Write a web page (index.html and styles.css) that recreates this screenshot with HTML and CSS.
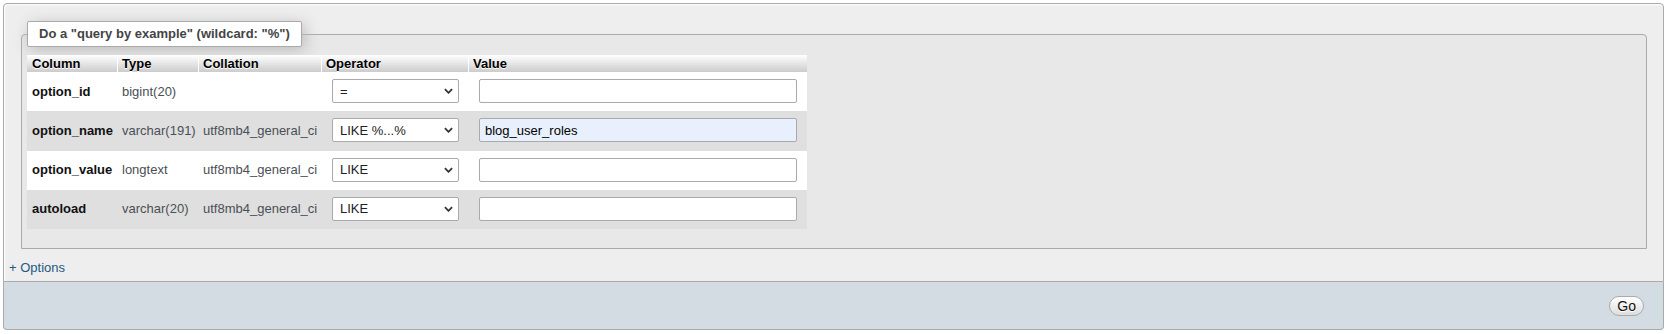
FILE: index.html
```html
<!DOCTYPE html>
<html lang="en">
<head>
    <meta charset="UTF-8">
    <title>Search</title>
    <link rel="stylesheet" href="styles.css">
</head>
<body>
    <div class="panel">
        <fieldset class="search">
            <legend>Do a "query by example" (wildcard: "%")</legend>
            <table class="data">
                <colgroup>
                    <col class="c-name">
                    <col class="c-type">
                    <col class="c-coll">
                    <col class="c-op">
                    <col class="c-val">
                </colgroup>
                <thead>
                    <tr>
                        <th>Column</th>
                        <th>Type</th>
                        <th>Collation</th>
                        <th>Operator</th>
                        <th>Value</th>
                    </tr>
                </thead>
                <tbody>
                    <tr class="odd">
                        <th>option_id</th>
                        <td>bigint(20)</td>
                        <td></td>
                        <td class="ctl"><select class="op"><option>=</option></select></td>
                        <td class="ctl ctl-val"><input class="val" type="text" value=""></td>
                    </tr>
                    <tr class="even">
                        <th>option_name</th>
                        <td>varchar(191)</td>
                        <td>utf8mb4_general_ci</td>
                        <td class="ctl"><select class="op"><option>LIKE %...%</option></select></td>
                        <td class="ctl ctl-val"><input class="val filled" type="text" value="blog_user_roles"></td>
                    </tr>
                    <tr class="odd">
                        <th>option_value</th>
                        <td>longtext</td>
                        <td>utf8mb4_general_ci</td>
                        <td class="ctl"><select class="op"><option>LIKE</option></select></td>
                        <td class="ctl ctl-val"><input class="val" type="text" value=""></td>
                    </tr>
                    <tr class="even">
                        <th>autoload</th>
                        <td>varchar(20)</td>
                        <td>utf8mb4_general_ci</td>
                        <td class="ctl"><select class="op"><option>LIKE</option></select></td>
                        <td class="ctl ctl-val"><input class="val" type="text" value=""></td>
                    </tr>
                </tbody>
            </table>
        </fieldset>
        <div class="options"><a href="#">+ Options</a></div>
    </div>
    <div class="footer">
        <button class="go" type="button">Go</button>
    </div>
</body>
</html>
```

FILE: styles.css
```css
body {
    margin: 0;
    background: #fff;
    font-family: 'Liberation Sans', Arial, sans-serif;
    font-size: 13px;
    color: #444;
}

.panel {
    margin: 3px 3px 0;
    padding: 0 5px;
    background: #eee;
    border: 1px solid #aaa;
    border-radius: 4px 4px 0 0;
    box-shadow: inset 1px 1px 2px #fff;
}

.search {
    margin: 17px 11px 0 12px;
    padding: 8px 5px 19px;
    min-width: 0;
    background: #e8e8e8;
    border: 1px solid #aaa;
    border-radius: 4px 4px 0 0;
}
.search legend {
    padding: 5px 11px;
    line-height: 14px;
    font-weight: bold;
    color: #444;
    background: #fff;
    border: 1px solid #aaa;
    border-radius: 2px;
    box-shadow: 3px 3px 15px #bbb;
}

.data {
    width: 780px;
    table-layout: fixed;
    border-collapse: collapse;
}
.c-name { width: 90px; }
.c-type { width: 81px; }
.c-coll { width: 123px; }
.c-op { width: 147px; }
.c-val { width: 339px; }

.data thead th {
    height: 17px;
    padding: 0 5px;
    line-height: 17px;
    text-align: left;
    font-weight: bold;
    color: #000;
    background: linear-gradient(#fff, #ccc);
    text-shadow: 0 1px 0 #fff;
}
.data thead th + th {
    box-shadow: inset 1px 0 0 #fff;
}

.data tbody th,
.data tbody td {
    padding: 7px 5px 8.25px;
    line-height: 15px;
    text-align: left;
    vertical-align: middle;
    white-space: nowrap;
}
.data tbody th {
    font-weight: bold;
    color: #111;
}
.data tbody td {
    color: #4a4f55;
}
.data tr.odd { background: #fff; }
.data tr.even { background: #dfdfdf; }

.data td.ctl {
    padding-left: 11px;
    padding-right: 9px;
}
.data td.ctl-val {
    padding-right: 10px;
}

.op {
    display: block;
    width: 127px;
    height: 24px;
    margin: 0;
    padding: 0 20px 0 7px;
    font-family: inherit;
    font-size: 13px;
    color: #222;
    border: 1px solid #aaa;
    border-radius: 2px;
    -webkit-appearance: none;
    appearance: none;
    background: #fff url("data:image/svg+xml,%3Csvg xmlns='http://www.w3.org/2000/svg' viewBox='0 0 10 6'%3E%3Cpath d='M1 1l4 4 4-4' fill='none' stroke='%23333' stroke-width='2'/%3E%3C/svg%3E") no-repeat right 5px center;
    background-size: 9px 6px;
}

.val {
    display: block;
    box-sizing: border-box;
    width: 318px;
    height: 24px;
    margin: 0;
    padding: 0 5px;
    font-family: inherit;
    font-size: 13px;
    color: #000;
    background: #fff;
    border: 1px solid #aaa;
    border-radius: 2px;
}
.val.filled {
    background: #e8f0fe;
}

.options {
    padding: 11px 0 6px;
    line-height: 15px;
}
.options a {
    color: #235a81;
    text-decoration: none;
}

.footer {
    display: flex;
    justify-content: flex-end;
    margin: 0 3px 3px;
    padding: 14px 19px 13px;
    background: #d3dce3;
    border: 1px solid #aaa;
    border-top: none;
    border-radius: 0 0 4px 4px;
}
.go {
    height: 20px;
    padding: 0 7px;
    font-family: inherit;
    font-size: 14px;
    line-height: 18px;
    color: #111;
    background: linear-gradient(#fff, #ddd);
    border: 1px solid #aaa;
    border-radius: 12px;
    text-shadow: 0 1px 0 #fff;
}
```
